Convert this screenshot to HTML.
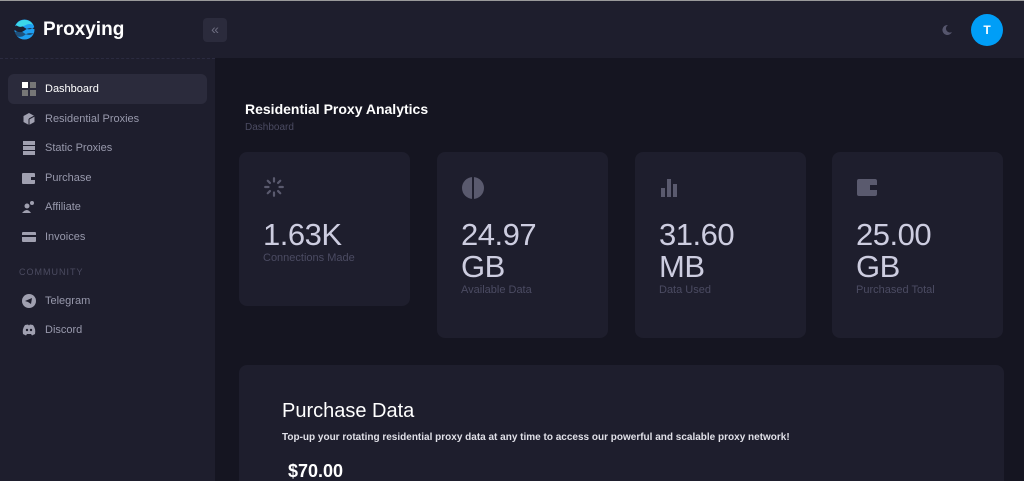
<!DOCTYPE html><html style="overflow:hidden;height:481px"><head><style>
*{box-sizing:border-box;margin:0;padding:0}
body{width:1024px;height:481px;overflow:hidden;background:#151521;font-family:"Liberation Sans",sans-serif;position:relative;border-top:1px solid #9a9a9a}
.hdr{position:absolute;left:0;top:0;width:1024px;height:57px;background:#1e1e2d}
.side{position:absolute;left:0;top:57px;width:215px;height:424px;background:#1e1e2d;border-top:1px dashed #2b2b40}
.logo{position:absolute;left:14px;top:18px}
.brand{position:absolute;left:43px;top:18px;color:#fff;font-size:19px;font-weight:bold}
.tog{position:absolute;left:203px;top:17px;width:24px;height:24px;background:#2b2b3c;border-radius:4px;color:#6d6d80;font-size:14px;text-align:center;line-height:22px}
.av{position:absolute;left:971px;top:13px;width:32px;height:32px;border-radius:50%;background:#009ef7;color:#fff;font-size:12px;font-weight:bold;text-align:center;line-height:32px}
.item{position:absolute;left:8px;width:199px;height:30px;border-radius:6px;color:#9899ac;font-size:11px;line-height:30px;padding-left:37px}
.item.act{background:#2b2b3c;color:#fff}
.ic{position:absolute;left:14px;top:8px;width:14px;height:14px}
.sec{position:absolute;left:19px;color:#4b4b60;font-size:9px;letter-spacing:1px}
.card{position:absolute;background:#1e1e2d;border-radius:8px;width:171px}
.num{position:absolute;left:24px;color:#cdcde0;font-size:31px;line-height:32px;letter-spacing:-0.5px}
.lab{position:absolute;left:24px;color:#4b4b62;font-size:11px}
.cic{position:absolute;left:24px;top:24px}
</style></head><body>
<div class="hdr"></div>
<svg class="logo" width="21" height="21" viewBox="0 0 22 22"><circle cx="11" cy="11" r="10.5" fill="#1e9ff2"/><path d="M0 8 Q6 5 11 9 T22 8 V11 Q16 8 11 12 T0 11Z" fill="#1e1e2d"/><path d="M0 14 Q6 11 11 15 T22 14 V16 Q16 13 11 17 T0 16Z" fill="#1e1e2d" opacity="0.6"/><path d="M2 6 A10.5 10.5 0 0 1 20 6 Q16 4 11 7 T2 6Z" fill="#3cd6e8"/></svg>
<div class="brand">Proxying</div>
<div class="tog">«</div>
<svg style="position:absolute;left:941px;top:23px" width="12" height="12" viewBox="0 0 12 12"><path d="M7 1 A5 5 0 1 0 11 8 A4 4 0 0 1 7 1Z" fill="#56566d"/></svg>
<div class="av">T</div>
<div class="side">
<div class="item act" style="top:15px"><svg class="ic" viewBox="0 0 14 14"><rect width="6" height="6" fill="#fff"/><rect x="8" width="6" height="6" fill="#777"/><rect y="8" width="6" height="6" fill="#777"/><rect x="8" y="8" width="6" height="6" fill="#777"/></svg>Dashboard</div>
<div class="item" style="top:45px"><svg class="ic" viewBox="0 0 14 14"><path d="M7 1 L12.5 4 V10 L7 13 L1.5 10 V4Z" fill="#a0a0b0"/><path d="M7 7 L12.5 4 M7 7 V13" stroke="#1e1e2d"/></svg>Residential Proxies</div>
<div class="item" style="top:74px"><svg class="ic" viewBox="0 0 14 14"><rect x="1" y="0" width="12" height="4" fill="#a0a0b0"/><rect x="1" y="5" width="12" height="4" fill="#a0a0b0"/><rect x="1" y="10" width="12" height="4" fill="#a0a0b0"/></svg>Static Proxies</div>
<div class="item" style="top:104px"><svg class="ic" viewBox="0 0 14 14"><rect x="0" y="2" width="13" height="11" rx="1" fill="#a0a0b0"/><rect x="9" y="6" width="5" height="3" fill="#1e1e2d"/></svg>Purchase</div>
<div class="item" style="top:133px"><svg class="ic" viewBox="0 0 14 14"><circle cx="5" cy="6" r="2.5" fill="#a0a0b0"/><path d="M0 13 Q5 7 9 13Z" fill="#a0a0b0"/><circle cx="10" cy="3" r="2" fill="#a0a0b0"/></svg>Affiliate</div>
<div class="item" style="top:163px"><svg class="ic" viewBox="0 0 14 14"><rect x="0" y="2" width="14" height="10" rx="1" fill="#a0a0b0"/><rect x="0" y="5" width="14" height="2" fill="#1e1e2d"/></svg>Invoices</div>
<div class="sec" style="top:208px">COMMUNITY</div>
<div class="item" style="top:227px"><svg class="ic" viewBox="0 0 14 14"><circle cx="7" cy="7" r="7" fill="#a0a0b0"/><path d="M3 7 L10 4 L9 10 L6 8Z" fill="#1e1e2d"/></svg>Telegram</div>
<div class="item" style="top:256px"><svg class="ic" viewBox="0 0 14 14"><path d="M1 11 Q0 6 3 2 L6 1.5 L7 2.5 L8 1.5 L11 2 Q14 6 13 11 L10 12.5 L9 11 L5 11 L4 12.5Z" fill="#a0a0b0"/><circle cx="5" cy="7" r="1.2" fill="#1e1e2d"/><circle cx="9" cy="7" r="1.2" fill="#1e1e2d"/></svg>Discord</div>
</div>
<div style="position:absolute;left:245px;top:100px;color:#fff;font-size:14px;font-weight:bold">Residential Proxy Analytics</div>
<div style="position:absolute;left:245px;top:121px;color:#4b4b62;font-size:10px">Dashboard</div>
<div class="card" style="left:239px;top:151px;height:154px">
<svg class="cic" width="22" height="22" viewBox="0 0 20 20" style="left:24px"><g stroke="#5a5a6e" stroke-width="2" stroke-linecap="round"><path d="M10 2v3M15.7 4.3l-2 2M18 10h-3M15.7 15.7l-2-2M10 18v-3M4.3 15.7l2-2M2 10h3M4.3 4.3l2 2"/></g></svg>
<div class="num" style="top:67px">1.63K</div><div class="lab" style="top:100px">Connections Made</div></div>
<div class="card" style="left:437px;top:151px;height:186px">
<svg class="cic" width="24" height="24" viewBox="0 0 24 24"><circle cx="12" cy="12" r="11" fill="#5a5a6e"/><rect x="11" y="0" width="2" height="24" fill="#1e1e2d"/></svg>
<div class="num" style="top:67px">24.97<br>GB</div><div class="lab" style="top:132px">Available Data</div></div>
<div class="card" style="left:635px;top:151px;height:186px">
<svg class="cic" width="22" height="22" viewBox="0 0 22 22"><rect x="2" y="12" width="4" height="9" fill="#5a5a6e"/><rect x="8" y="3" width="4" height="18" fill="#5a5a6e"/><rect x="14" y="8" width="4" height="13" fill="#5a5a6e"/></svg>
<div class="num" style="top:67px">31.60<br>MB</div><div class="lab" style="top:132px">Data Used</div></div>
<div class="card" style="left:832px;top:151px;height:186px">
<svg class="cic" width="22" height="22" viewBox="0 0 22 22"><rect x="1" y="3" width="20" height="17" rx="2" fill="#5a5a6e"/><rect x="14" y="9" width="7" height="5" fill="#1e1e2d"/></svg>
<div class="num" style="top:67px">25.00<br>GB</div><div class="lab" style="top:132px">Purchased Total</div></div>
<div class="card" style="left:239px;top:364px;width:765px;height:117px;border-radius:8px 8px 0 0">
<div style="position:absolute;left:43px;top:35px;color:#fff;font-size:20px">Purchase Data</div>
<div style="position:absolute;left:43px;top:67px;color:#e0e0e8;font-size:10px;font-weight:bold">Top-up your rotating residential proxy data at any time to access our powerful and scalable proxy network!</div>
<div style="position:absolute;left:49px;top:96px;color:#fff;font-size:18px;font-weight:bold">$70.00</div>
</div>
</body></html>
